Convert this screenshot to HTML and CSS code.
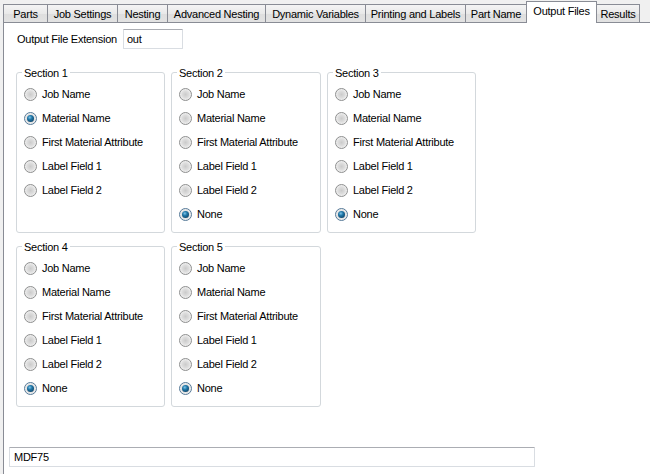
FILE: index.html
```html
<!DOCTYPE html>
<html>
<head>
<meta charset="utf-8">
<link rel="stylesheet" href="styles.css">
</head>
<body>
<div class="tabs">
  <div class="tab w-parts">Parts</div>
  <div class="tab w-job">Job Settings</div>
  <div class="tab w-nest">Nesting</div>
  <div class="tab w-adv">Advanced Nesting</div>
  <div class="tab w-dyn">Dynamic Variables</div>
  <div class="tab w-print">Printing and Labels</div>
  <div class="tab w-pname">Part Name</div>
  <div class="tab w-out active">Output Files</div>
  <div class="tab w-res">Results</div>
</div>
<div class="panel">
  <div class="ext-row">
    <span class="ext-label">Output File Extension</span>
    <div class="textbox ext-box">out</div>
  </div>
  <div class="groups">
    <div class="group">
      <span class="group-title">Section 1</span>
      <div class="opt"><span class="radio"></span>Job Name</div>
      <div class="opt"><span class="radio checked"></span>Material Name</div>
      <div class="opt"><span class="radio"></span>First Material Attribute</div>
      <div class="opt"><span class="radio"></span>Label Field 1</div>
      <div class="opt"><span class="radio"></span>Label Field 2</div>
    </div>
    <div class="group">
      <span class="group-title">Section 2</span>
      <div class="opt"><span class="radio"></span>Job Name</div>
      <div class="opt"><span class="radio"></span>Material Name</div>
      <div class="opt"><span class="radio"></span>First Material Attribute</div>
      <div class="opt"><span class="radio"></span>Label Field 1</div>
      <div class="opt"><span class="radio"></span>Label Field 2</div>
      <div class="opt"><span class="radio checked"></span>None</div>
    </div>
    <div class="group">
      <span class="group-title">Section 3</span>
      <div class="opt"><span class="radio"></span>Job Name</div>
      <div class="opt"><span class="radio"></span>Material Name</div>
      <div class="opt"><span class="radio"></span>First Material Attribute</div>
      <div class="opt"><span class="radio"></span>Label Field 1</div>
      <div class="opt"><span class="radio"></span>Label Field 2</div>
      <div class="opt"><span class="radio checked"></span>None</div>
    </div>
    <div class="group">
      <span class="group-title">Section 4</span>
      <div class="opt"><span class="radio"></span>Job Name</div>
      <div class="opt"><span class="radio"></span>Material Name</div>
      <div class="opt"><span class="radio"></span>First Material Attribute</div>
      <div class="opt"><span class="radio"></span>Label Field 1</div>
      <div class="opt"><span class="radio"></span>Label Field 2</div>
      <div class="opt"><span class="radio checked"></span>None</div>
    </div>
    <div class="group">
      <span class="group-title">Section 5</span>
      <div class="opt"><span class="radio"></span>Job Name</div>
      <div class="opt"><span class="radio"></span>Material Name</div>
      <div class="opt"><span class="radio"></span>First Material Attribute</div>
      <div class="opt"><span class="radio"></span>Label Field 1</div>
      <div class="opt"><span class="radio"></span>Label Field 2</div>
      <div class="opt"><span class="radio checked"></span>None</div>
    </div>
  </div>
  <div class="textbox bottom-box">MDF75</div>
</div>
</body>
</html>
```
FILE: styles.css
```css
html, body {
  margin: 0;
  padding: 0;
  height: 100%;
}
body {
  background: #f0f0f0;
  font-family: "Liberation Sans", Arial, sans-serif;
  font-size: 11px;
  letter-spacing: -0.25px;
  color: #000;
  overflow: hidden;
}
.tabs {
  display: flex;
  align-items: flex-end;
  height: 22px;
  padding-left: 3px;
  box-sizing: border-box;
}
.tab {
  box-sizing: border-box;
  height: 18px;
  margin-left: -1px;
  border: 1px solid #898c95;
  border-bottom: none;
  background: linear-gradient(#f4f4f4, #e9e9e9 50%, #dedede 51%, #e2e2e2);
  display: flex;
  align-items: center;
  justify-content: center;
  padding-top: 1px;
  white-space: nowrap;
}
.tab:first-child { margin-left: 0; }
.tab.active {
  height: 22px;
  margin-bottom: -1px;
  background: #fff;
  position: relative;
  z-index: 1;
  padding-top: 0;
  padding-bottom: 3px;
}
.w-parts { width: 45px; }
.w-job { width: 71px; }
.w-nest { width: 51px; }
.w-adv { width: 99px; }
.w-dyn { width: 101px; }
.w-print { width: 101px; }
.w-pname { width: 62px; }
.w-out { width: 71px; }
.w-res { width: 44px; }
.panel {
  margin-left: 3px;
  height: calc(100% - 22px);
  box-sizing: border-box;
  background: #fff;
  border-top: 1px solid #898c95;
  border-left: 1px solid #898c95;
  padding: 6px 0 0 12px;
}
.ext-row {
  display: flex;
  align-items: center;
  height: 20px;
  padding-left: 1px;
}
.ext-label {
  width: 106px;
}
.textbox {
  box-sizing: border-box;
  border: 1px solid #d9dde2;
  border-top-color: #abadb3;
  background: #fff;
  display: flex;
  align-items: center;
  padding-left: 3px;
  border-radius: 1px;
}
.ext-box {
  width: 60px;
  height: 20px;
}
.groups {
  display: grid;
  grid-template-columns: 149px 150px 149px;
  grid-auto-rows: 161px;
  column-gap: 6px;
  row-gap: 13px;
  margin-top: 23px;
}
.group {
  position: relative;
  box-sizing: border-box;
  border: 1px solid #d3d8dc;
  border-radius: 3px;
  padding: 9px 0 0 7px;
}
.group-title {
  position: absolute;
  top: -7px;
  left: 5px;
  padding: 0 2px;
  background: #fff;
  line-height: 14px;
}
.opt {
  display: flex;
  align-items: center;
  height: 24px;
}
.radio {
  position: relative;
  box-sizing: border-box;
  width: 13px;
  height: 13px;
  border-radius: 50%;
  border: 1px solid #8e8f8f;
  background: radial-gradient(circle at 50% 50%, #cbcbcb 0, #dedede 45%, #f2f2f2 75%);
  margin-right: 5px;
  flex: none;
}
.radio.checked {
  border-color: #567a98;
}
.radio.checked::after {
  content: "";
  position: absolute;
  left: 2px;
  top: 2px;
  width: 7px;
  height: 7px;
  border-radius: 50%;
  background: radial-gradient(circle at 40% 35%, #7fc4e8 0, #1f77a8 35%, #114a70 75%, #0b3350 100%);
}
.bottom-box {
  margin-top: 40px;
  margin-left: -7px;
  width: 526px;
  height: 20px;
  padding-left: 4px;
}
```
